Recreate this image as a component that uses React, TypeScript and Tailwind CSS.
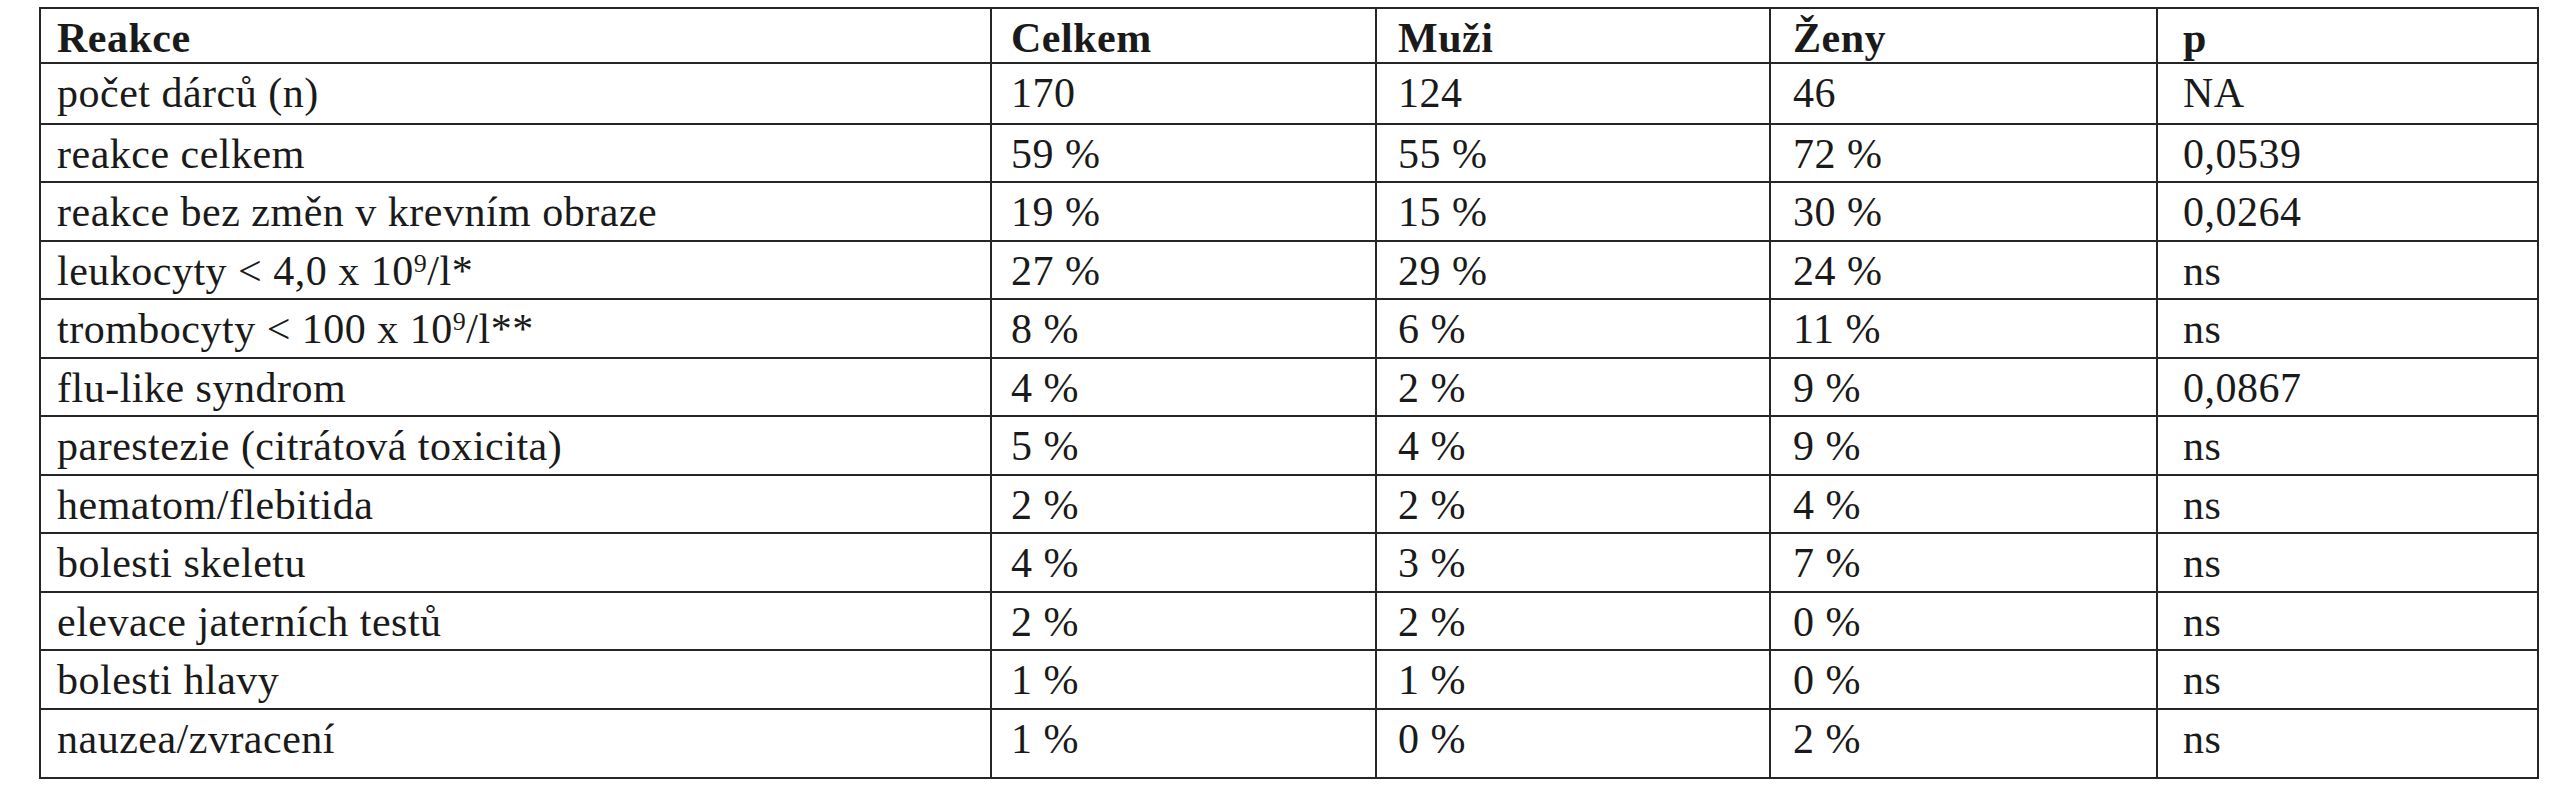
type Row = { label: React.ReactNode; total: string; men: string; women: string; p: string };

const rows: Row[] = [
  { label: 'počet dárců (n)', total: '170', men: '124', women: '46', p: 'NA' },
  { label: 'reakce celkem', total: '59 %', men: '55 %', women: '72 %', p: '0,0539' },
  { label: 'reakce bez změn v krevním obraze', total: '19 %', men: '15 %', women: '30 %', p: '0,0264' },
  {
    label: (
      <>
        leukocyty &lt; 4,0 x 10<sup className="text-[26px]">9</sup>/l*
      </>
    ),
    total: '27 %',
    men: '29 %',
    women: '24 %',
    p: 'ns',
  },
  {
    label: (
      <>
        trombocyty &lt; 100 x 10<sup className="text-[26px]">9</sup>/l**
      </>
    ),
    total: '8 %',
    men: '6 %',
    women: '11 %',
    p: 'ns',
  },
  { label: 'flu-like syndrom', total: '4 %', men: '2 %', women: '9 %', p: '0,0867' },
  { label: 'parestezie (citrátová toxicita)', total: '5 %', men: '4 %', women: '9 %', p: 'ns' },
  { label: 'hematom/flebitida', total: '2 %', men: '2 %', women: '4 %', p: 'ns' },
  { label: 'bolesti skeletu', total: '4 %', men: '3 %', women: '7 %', p: 'ns' },
  { label: 'elevace jaterních testů', total: '2 %', men: '2 %', women: '0 %', p: 'ns' },
  { label: 'bolesti hlavy', total: '1 %', men: '1 %', women: '0 %', p: 'ns' },
  { label: 'nauzea/zvracení', total: '1 %', men: '0 %', women: '2 %', p: 'ns' },
];

// row heights incl. bottom rule, measured from the scan
const heights = ['h-[61px]', 'h-[58px]', 'h-[59px]', 'h-[58px]', 'h-[59px]', 'h-[58px]', 'h-[59px]', 'h-[58px]', 'h-[59px]', 'h-[58px]', 'h-[59px]', 'h-[67px]'];

function Line({ cells, height, bold, last }: { cells: React.ReactNode[]; height: string; bold?: boolean; last?: boolean }) {
  return (
    <div className={`grid grid-cols-[951px_385px_394px_387px_379px] ${height} ${last ? '' : 'border-b-2 border-[#262626]'} ${bold ? 'font-bold' : ''}`}>
      <div className="border-r-2 border-[#262626] pl-[16px] pt-[5px] leading-[48px] whitespace-nowrap">{cells[0]}</div>
      <div className="border-r-2 border-[#262626] pl-[19px] pt-[5px] leading-[48px]">{cells[1]}</div>
      <div className="border-r-2 border-[#262626] pl-[21px] pt-[5px] leading-[48px]">{cells[2]}</div>
      <div className="border-r-2 border-[#262626] pl-[22px] pt-[5px] leading-[48px]">{cells[3]}</div>
      <div className="pl-[25px] pt-[5px] leading-[48px]">{cells[4]}</div>
    </div>
  );
}

export default function App() {
  return (
    <div className="w-[2576px] h-[800px] bg-white pt-[7px] pl-[39px] font-['Liberation_Serif','Times_New_Roman',serif] text-[42px] tracking-[0.5px] text-[#1a1a1a]">
      <div className="w-[2500px] border-2 border-[#262626]">
        <Line cells={['Reakce', 'Celkem', 'Muži', 'Ženy', 'p']} height="h-[55px]" bold />
        {rows.map((r, i) => (
          <Line
            key={i}
            cells={[r.label, r.total, r.men, r.women, r.p]}
            height={heights[i]}
            last={i === rows.length - 1}
          />
        ))}
      </div>
    </div>
  );
}
